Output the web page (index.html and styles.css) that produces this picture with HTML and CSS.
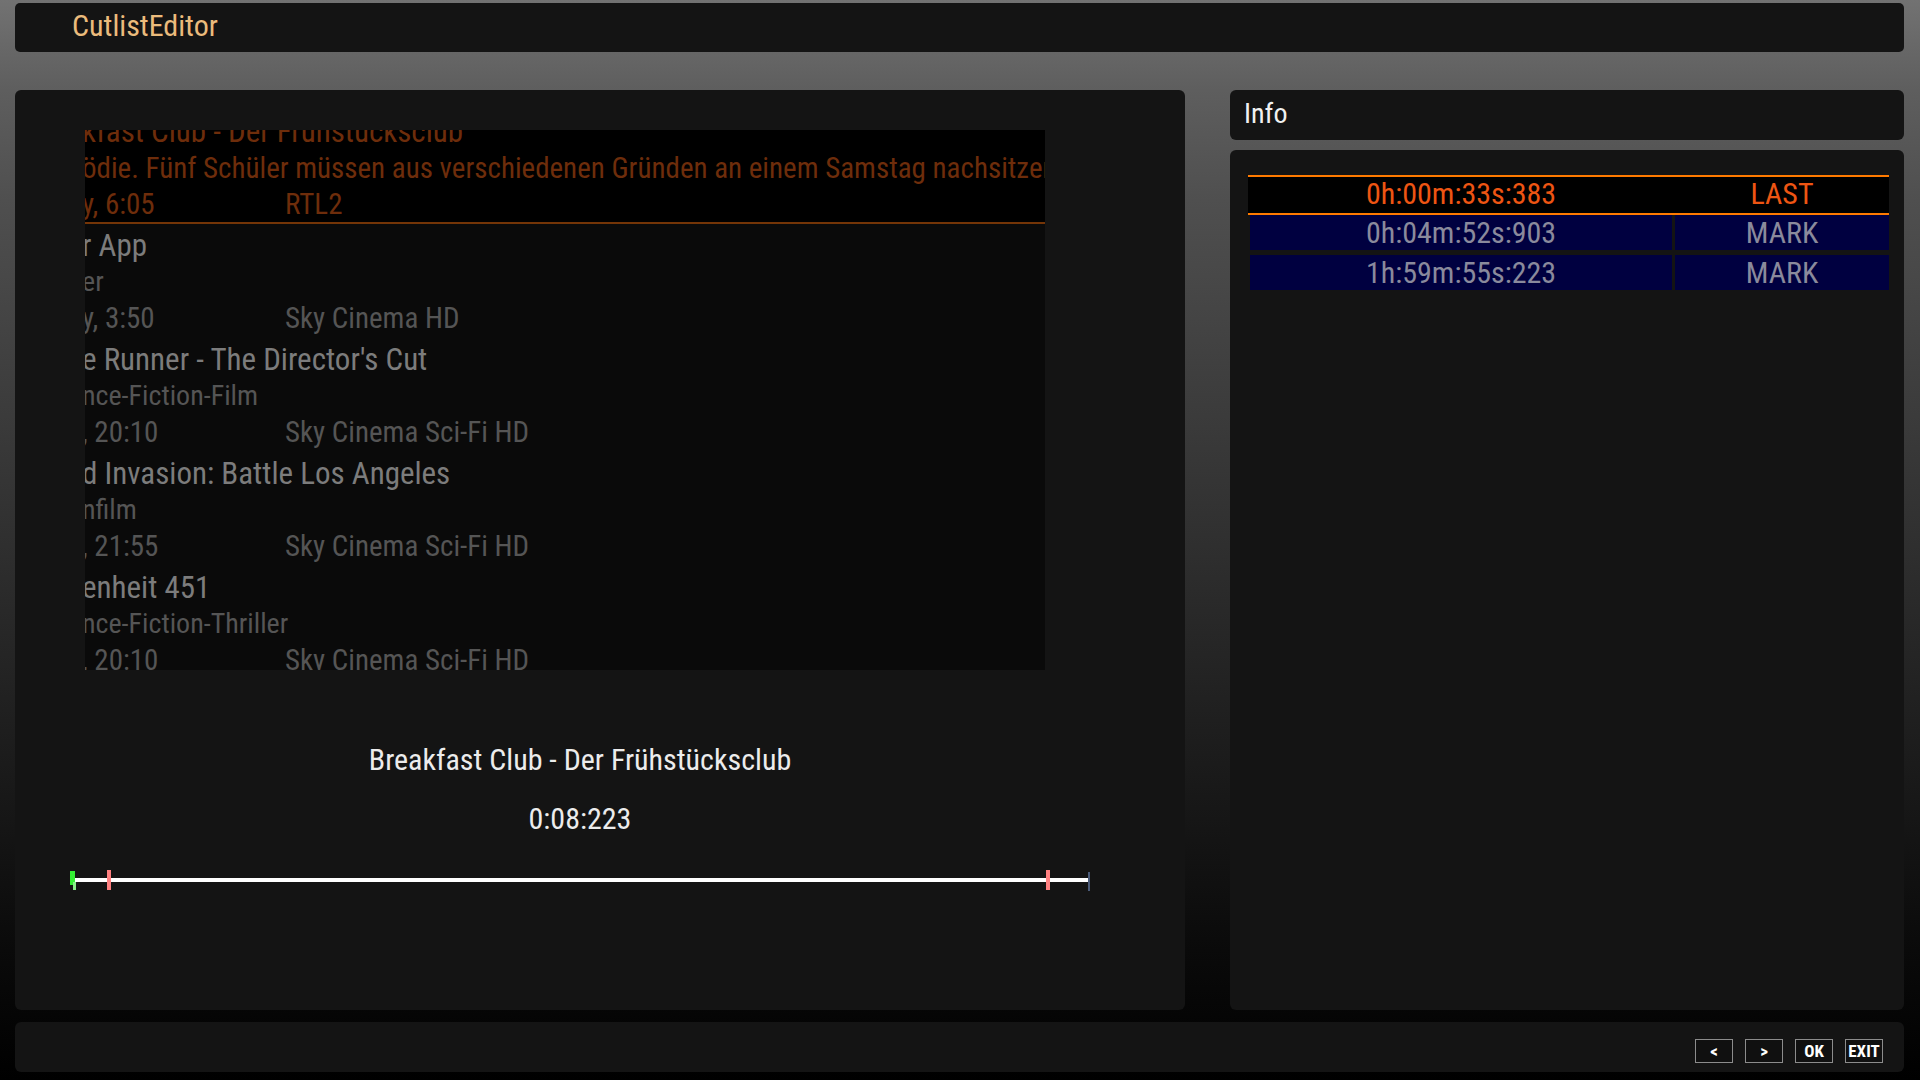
FILE: index.html
```html
<!DOCTYPE html>
<html lang="de">
<head>
<meta charset="utf-8">
<title>CutlistEditor</title>
<link rel="stylesheet" href="styles.css">
</head>
<body>
<div class="screen">
  <header class="titlebar"><span class="title">CutlistEditor</span></header>

  <main class="main">
    <section class="left-panel">
      <div class="video">
        <div class="epg">
          <div class="item selected">
            <div class="l-title">kfast Club - Der Frühstücksclub</div>
            <div class="l-sub">ödie. Fünf Schüler müssen aus verschiedenen Gründen an einem Samstag nachsitzen.</div>
            <div class="l-time"><span>y, 6:05</span><span>RTL2</span></div>
          </div>
          <div class="item">
            <div class="l-title">r App</div>
            <div class="l-sub">er</div>
            <div class="l-time"><span>y, 3:50</span><span>Sky Cinema HD</span></div>
          </div>
          <div class="item">
            <div class="l-title">e Runner - The Director's Cut</div>
            <div class="l-sub">nce-Fiction-Film</div>
            <div class="l-time"><span>, 20:10</span><span>Sky Cinema Sci-Fi HD</span></div>
          </div>
          <div class="item">
            <div class="l-title">d Invasion: Battle Los Angeles</div>
            <div class="l-sub">nfilm</div>
            <div class="l-time"><span>, 21:55</span><span>Sky Cinema Sci-Fi HD</span></div>
          </div>
          <div class="item">
            <div class="l-title">enheit 451</div>
            <div class="l-sub">nce-Fiction-Thriller</div>
            <div class="l-time"><span>, 20:10</span><span>Sky Cinema Sci-Fi HD</span></div>
          </div>
        </div>
      </div>

      <div class="recinfo">
        <div class="rec-title">Breakfast Club - Der Frühstücksclub</div>
        <div class="rec-time">0:08:223</div>
        <div class="track">
          <div class="track-line"></div>
          <div class="mk mk-pos"></div>
          <div class="mk mk-pos2"></div>
          <div class="mk mk-cut" style="left:37px"></div>
          <div class="mk mk-cut" style="left:976px"></div>
          <div class="mk mk-end"></div>
        </div>
      </div>
    </section>

    <aside class="right-col">
      <div class="info-head">Info</div>
      <div class="info-body">
        <div class="marks">
          <div class="row row-last">
            <div class="cell">0h:00m:33s:383</div>
            <div class="cell">LAST</div>
          </div>
          <div class="row row-mark">
            <div class="cell">0h:04m:52s:903</div>
            <div class="cell">MARK</div>
          </div>
          <div class="row row-mark">
            <div class="cell">1h:59m:55s:223</div>
            <div class="cell">MARK</div>
          </div>
        </div>
      </div>
    </aside>
  </main>

  <footer class="bottombar">
    <span class="key">&lt;</span>
    <span class="key">&gt;</span>
    <span class="key">OK</span>
    <span class="key">EXIT</span>
  </footer>
</div>
</body>
</html>
```

FILE: styles.css
```css
html, body {
  margin: 0;
  padding: 0;
}

body {
  width: 1920px;
  height: 1080px;
  overflow: hidden;
  background: linear-gradient(to bottom, #727272 0px, #5e5e5e 90px, #4f4f4f 200px, #2a2a2a 600px, #0a0a0a 950px, #000 1080px);
  font-family: "Roboto Condensed", Roboto, "Liberation Sans Narrow", sans-serif;
  font-stretch: 75%;
  color: #eee;
}

.screen {
  display: flex;
  flex-direction: column;
  padding: 3px 16px 0 15px;
  height: 1080px;
  box-sizing: border-box;
}

.titlebar {
  height: 49px;
  background: #141414;
  border-radius: 5px;
  display: flex;
  align-items: center;
  padding-left: 57px;
}

.title {
  color: #ebbb7c;
  font-size: 30px;
  line-height: 1;
  margin-top: -4px;
}

.main {
  margin-top: 38px;
  height: 920px;
  display: flex;
  gap: 45px;
}

.left-panel {
  width: 1170px;
  background: #141414;
  border-radius: 6px;
  padding-top: 40px;
  box-sizing: border-box;
}

.video {
  margin-left: 70px;
  width: 960px;
  height: 540px;
  background: #0a0a0a;
  overflow: hidden;
}

.epg {
  margin-top: -16px;
}

.item {
  padding-bottom: 6px;
  white-space: nowrap;
  margin-left: -3px;
}

.item.selected {
  background: #000;
  padding-bottom: 0;
  border-bottom: 2px solid #743507;
  margin-bottom: 4px;
  margin-left: 0;
}

.item.selected > div {
  margin-left: -3px;
}

.l-title,
.l-sub,
.l-time {
  height: 36px;
  line-height: 36px;
  overflow: hidden;
}

.l-title {
  font-size: 31px;
  color: #7c7c7c;
}

.l-sub {
  font-size: 28px;
  color: #555;
}

.l-time {
  font-size: 29px;
  color: #555;
  display: grid;
  grid-template-columns: 203px 1fr;
}

.selected .l-sub {
  font-size: 29px;
}

.selected .l-title,
.selected .l-sub,
.selected .l-time {
  color: #6e2d0b;
}

.recinfo {
  margin-left: 55px;
  width: 1020px;
  display: flex;
  flex-direction: column;
  align-items: center;
  padding-top: 72px;
}

.rec-title {
  font-size: 30px;
  line-height: 36px;
  color: #ececec;
}

.rec-time {
  margin-top: 23px;
  font-size: 30px;
  line-height: 36px;
  color: #ececec;
}

.track {
  position: relative;
  margin-top: 33px;
  width: 1020px;
  height: 20px;
}

.track-line {
  position: absolute;
  left: 5px;
  top: 8px;
  width: 1013px;
  height: 4px;
  background: #fff;
}

.mk {
  position: absolute;
}

.mk-pos {
  left: 0;
  top: 1px;
  width: 5px;
  height: 14px;
  background: #33ee33;
}

.mk-pos2 {
  left: 3px;
  top: 12px;
  width: 3px;
  height: 8px;
  background: #88ee88;
}

.mk-cut {
  top: 0;
  width: 4px;
  height: 20px;
  background: #ff8080;
}

.mk-end {
  left: 1018px;
  top: 2px;
  width: 2px;
  height: 19px;
  background: #4a5a78;
}

.right-col {
  flex: 1;
  display: flex;
  flex-direction: column;
  gap: 10px;
}

.info-head {
  height: 50px;
  background: #141414;
  border-radius: 6px;
  display: flex;
  align-items: center;
  padding-left: 14px;
  padding-bottom: 4px;
  box-sizing: border-box;
  font-size: 28px;
  color: #f0f0f0;
}

.info-body {
  flex: 1;
  background: #141414;
  border-radius: 6px;
  padding: 25px 15px 0 20px;
}

.marks {
  display: flex;
  flex-direction: column;
}

.row {
  display: grid;
  grid-template-columns: 422px 1fr;
  column-gap: 3px;
  font-size: 30px;
  text-align: center;
}

.row-last {
  height: 36px;
  line-height: 33px;
  background: #000;
  border-top: 2px solid #ff7a00;
  border-bottom: 2px solid #ff7a00;
  color: #ee5513;
  margin-left: -2px;
  padding-left: 2px;
}

.row-mark {
  height: 35px;
  line-height: 35px;
  color: #8a8a9c;
}

.row-mark .cell {
  background: #000040;
}

.row-mark + .row-mark {
  margin-top: 5px;
}

.bottombar {
  margin-top: 12px;
  height: 50px;
  background: #141414;
  border-radius: 6px;
  display: flex;
  justify-content: flex-end;
  align-items: flex-end;
  gap: 12px;
  padding: 0 21px 9px 0;
  box-sizing: border-box;
}

.key {
  width: 38px;
  height: 24px;
  box-sizing: border-box;
  border: 1px solid #8c8c8c;
  background: #101010;
  color: #fff;
  font-weight: bold;
  font-size: 17px;
  display: flex;
  align-items: center;
  justify-content: center;
  line-height: 1;
}
```
